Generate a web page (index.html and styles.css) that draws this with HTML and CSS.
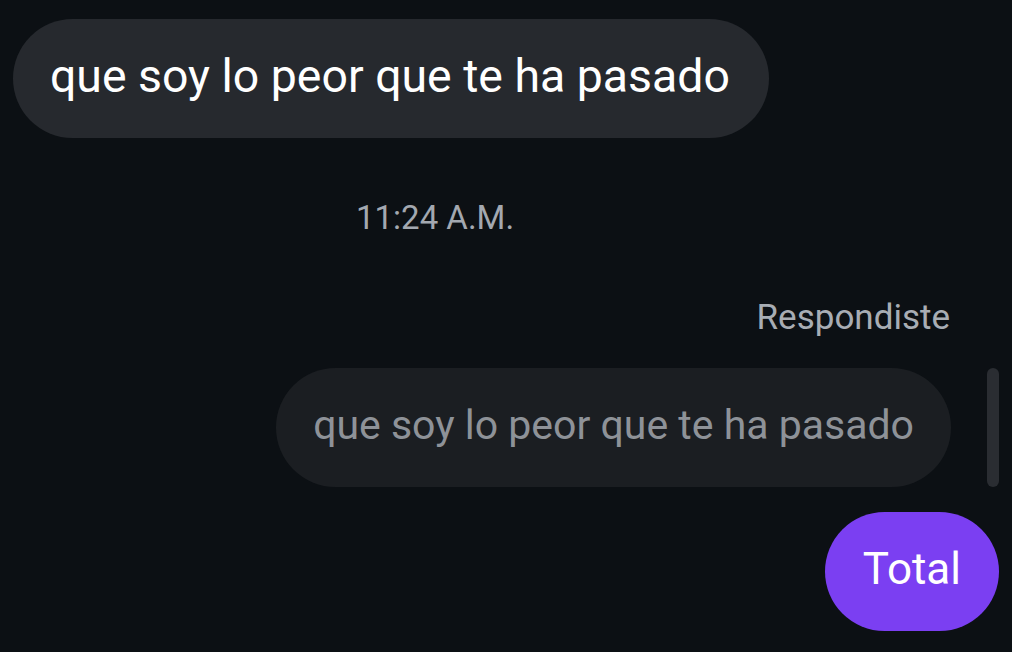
FILE: index.html
```html
<!DOCTYPE html>
<html lang="es">
<head>
    <meta charset="UTF-8">
    <meta name="viewport" content="width=device-width, initial-scale=1.0">
    <title>Chat</title>
    <link rel="stylesheet" href="styles.css">
</head>
<body>
    <div class="chat">
        <div class="row row-left">
            <div class="bubble bubble-in">que soy lo peor que te ha pasado</div>
        </div>

        <div class="timestamp">11:24 A.M.</div>

        <div class="reply-label">Respondiste</div>

        <div class="row row-right reply-row">
            <div class="bubble bubble-quote">que soy lo peor que te ha pasado</div>
            <div class="scroll-thumb"></div>
        </div>

        <div class="row row-right">
            <div class="bubble bubble-out">Total</div>
        </div>
    </div>
</body>
</html>
```

FILE: styles.css
```css
* {
    margin: 0;
    padding: 0;
    box-sizing: border-box;
}

body {
    font-family: 'Roboto', 'Inter', sans-serif;
    background: #0c1014;
    width: 1012px;
    height: 652px;
    overflow: hidden;
}

.chat {
    display: flex;
    flex-direction: column;
    padding-top: 19px;
}

.row {
    display: flex;
}

.row-left {
    padding-left: 13px;
}

.row-right {
    justify-content: flex-end;
    padding-right: 13px;
}

.bubble {
    height: 119px;
    line-height: 114px;
    border-radius: 60px;
    font-size: 46.4px;
    white-space: nowrap;
}

.bubble-in {
    background: #26292e;
    color: #ffffff;
    padding: 0 39px 0 37px;
}

.timestamp {
    margin-top: 60px;
    padding-left: 356px;
    font-size: 33px;
    line-height: 40px;
    color: #a3a8b0;
}

.reply-label {
    margin-top: 60px;
    align-self: flex-end;
    padding-right: 62px;
    font-size: 35px;
    line-height: 40px;
    color: #a8adb4;
}

.reply-row {
    margin-top: 30px;
    gap: 36px;
}

.bubble-quote {
    background: #1b1e22;
    color: #8e9298;
    font-size: 41px;
    padding: 0 37px;
}

.scroll-thumb {
    width: 12px;
    height: 119px;
    border-radius: 6px;
    background: #2a2d32;
}

.bubble-out {
    margin-top: 25px;
    background: #7b3ff2;
    color: #ffffff;
    font-size: 44px;
    padding: 0 38px;
}
```
